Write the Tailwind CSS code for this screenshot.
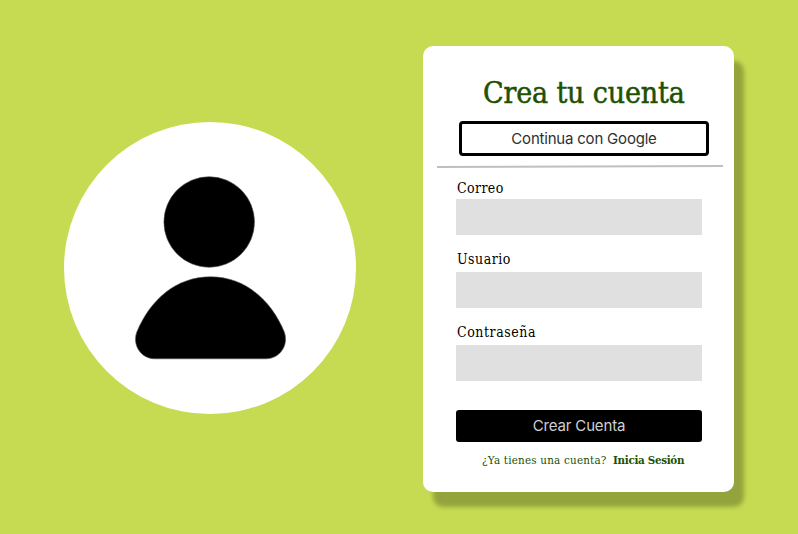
<!DOCTYPE html>
<html lang="es">
<head>
<meta charset="utf-8">
<title>Crea tu cuenta</title>
<script src="https://cdn.jsdelivr.net/npm/@tailwindcss/browser@4"></script>
</head>
<body class="flex h-[534px] w-[798px] overflow-hidden bg-[#c6db51] pl-16 font-['DejaVu_Serif_Condensed','DejaVu_Serif',serif]">
<div class="mt-[122px] size-[292px] shrink-0 rounded-full bg-white">
<svg class="size-full" viewBox="64 122 292 292" aria-hidden="true">
<circle cx="209.2" cy="222" r="45.3" stroke="#555" stroke-width=".6"/>
<path d="M210.5 276.8C245 276.8 271 300 284.3 332C289 345 280 358.8 266 358.8H155C141 358.8 132 345 136.8 332C150 300 176 276.8 210.5 276.8Z" stroke="#555" stroke-width=".6"/>
</svg>
</div>
<main class="mt-[46px] ml-[67px] flex h-[446px] w-[311px] shrink-0 flex-col rounded-[10px] bg-white pl-[33px] shadow-[10px_15px_4px_rgba(0,0,0,0.25)]">
<h1 class="mt-[27px] ml-[27px] h-10 whitespace-nowrap text-[30px] leading-10 tracking-[-0.15px] text-[#205000] [-webkit-text-stroke:0.5px_#205000]">Crea tu cuenta</h1>
<button class="mt-[8px] ml-[3px] h-[35px] w-[250px] shrink-0 rounded-[4px] border-3 border-black font-['Inter',sans-serif] text-[15px] leading-5 tracking-[-0.2px] text-[#303030]">Continua con Google</button>
<svg class="mt-[8px] -ml-[19px] h-[4px] w-[286px] shrink-0" viewBox="0 0 286 4"><path d="M0 3L286 2" stroke="#bfbfbf" stroke-width="2"/></svg>
<form class="flex w-[246px] flex-col">
<label class="mt-[10px] h-[21px] pl-px text-[14px] leading-5 tracking-[0.4px]">Correo</label>
<input class="h-9 bg-[#e0e0e0]">
<label class="mt-[14px] h-[23px] pl-px text-[14px] leading-5 tracking-[0.5px]">Usuario</label>
<input class="h-9 bg-[#e0e0e0]">
<label class="mt-[14px] h-[23px] pl-px text-[14px] leading-5 tracking-[0.55px]">Contraseña</label>
<input class="h-9 bg-[#e0e0e0]">
<button type="button" class="mt-[29px] h-8 rounded-[3px] bg-black font-['Inter',sans-serif] text-[15px] leading-5 tracking-[-0.15px] text-[#d0d0d0]">Crear Cuenta</button>
</form>
<p class="mt-[8px] ml-[26px] flex h-5 gap-[6px] whitespace-nowrap text-[11.5px] leading-5 text-[#205000]"><span class="w-[125px] tracking-[0.22px]">¿Ya tienes una cuenta?</span><a class="font-bold tracking-[-0.3px]">Inicia Sesión</a></p>
</main>
</body>
</html>
